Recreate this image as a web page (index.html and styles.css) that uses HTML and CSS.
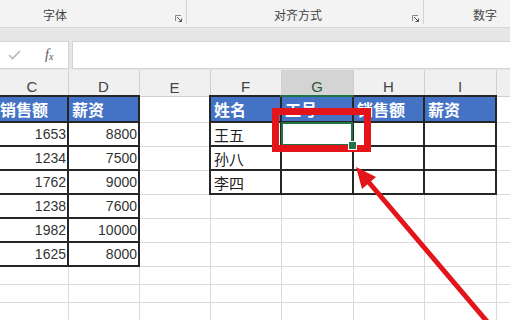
FILE: index.html
```html
<!DOCTYPE html>
<html lang="zh-CN">
<head>
    <meta charset="UTF-8">
    <title>工作表</title>
    <link rel="stylesheet" href="styles.css">
</head>
<body>
    <div class="ribbon">
        <div class="group g-font">
            <span class="group-label">字体</span>
            <span class="launcher"><svg width="7" height="7" viewBox="0 0 7 7"><path d="M0.5 6V0.5H6" fill="none" stroke="#888" stroke-width="1"/><path d="M2 2L6.5 6.5M6.5 3.5V6.5H3.5" fill="none" stroke="#555" stroke-width="1"/></svg></span>
        </div>
        <div class="group g-align">
            <span class="group-label">对齐方式</span>
            <span class="launcher"><svg width="7" height="7" viewBox="0 0 7 7"><path d="M0.5 6V0.5H6" fill="none" stroke="#888" stroke-width="1"/><path d="M2 2L6.5 6.5M6.5 3.5V6.5H3.5" fill="none" stroke="#555" stroke-width="1"/></svg></span>
        </div>
        <div class="group g-number">
            <span class="group-label">数字</span>
        </div>
    </div>

    <div class="formula-bar">
        <div class="name-box">
            <svg class="check" width="13" height="10" viewBox="0 0 13 10"><path d="M1 5L4.5 8.5L12 1" fill="none" stroke="#b8b8b8" stroke-width="1.6"/></svg>
            <span class="fx">f<sub>x</sub></span>
        </div>
        <div class="formula-input"></div>
    </div>

    <div class="sheet">
        <table class="grid">
            <colgroup>
                <col style="width:72px"><col style="width:71px"><col style="width:71px"><col style="width:71px">
                <col style="width:72px"><col style="width:71px"><col style="width:72px"><col style="width:30px">
            </colgroup>
            <tr class="col-heads">
                <td>C</td><td>D</td><td>E</td><td>F</td><td class="active-col">G</td><td>H</td><td>I</td><td></td>
            </tr>
            <tr class="r24">
                <td class="b head">销售额</td><td class="b head">薪资</td><td></td>
                <td class="b head">姓名</td><td class="b head">工号</td><td class="b head">销售额</td><td class="b head">薪资</td><td></td>
            </tr>
            <tr class="r24">
                <td class="b num">1653</td><td class="b num">8800</td><td></td>
                <td class="b">王五</td><td class="b selected"></td><td class="b"></td><td class="b"></td><td></td>
            </tr>
            <tr class="r24">
                <td class="b num">1234</td><td class="b num">7500</td><td></td>
                <td class="b">孙八</td><td class="b"></td><td class="b"></td><td class="b"></td><td></td>
            </tr>
            <tr class="r24">
                <td class="b num">1762</td><td class="b num">9000</td><td></td>
                <td class="b">李四</td><td class="b"></td><td class="b"></td><td class="b"></td><td></td>
            </tr>
            <tr class="r24">
                <td class="b num">1238</td><td class="b num">7600</td><td></td><td></td><td></td><td></td><td></td><td></td>
            </tr>
            <tr class="r24">
                <td class="b num">1982</td><td class="b num">10000</td><td></td><td></td><td></td><td></td><td></td><td></td>
            </tr>
            <tr class="r24">
                <td class="b num">1625</td><td class="b num">8000</td><td></td><td></td><td></td><td></td><td></td><td></td>
            </tr>
            <tr class="r18"><td></td><td></td><td></td><td></td><td></td><td></td><td></td><td></td></tr>
            <tr class="r18"><td></td><td></td><td></td><td></td><td></td><td></td><td></td><td></td></tr>
            <tr class="r18"><td></td><td></td><td></td><td></td><td></td><td></td><td></td><td></td></tr>
        </table>

        <!-- annotation: red frame and arrow pointing at the empty 工号 cell -->
        <div class="mark-box"></div>
        <svg class="mark-arrow" width="510" height="260" viewBox="0 70 510 260">
            <line x1="490" y1="325" x2="366" y2="179" stroke="#e3151a" stroke-width="5"/>
            <polygon points="356,167 376,177 362,189" fill="#e3151a"/>
        </svg>
    </div>
</body>
</html>
```

FILE: styles.css
```css
* {
    margin: 0;
    padding: 0;
    box-sizing: border-box;
}
html,
body {
    width: 510px;
    height: 320px;
    overflow: hidden;
    font-family: "Liberation Sans", "Noto Sans CJK SC", sans-serif;
    background: #fff;
}

/* ribbon group labels */
.ribbon {
    display: flex;
    height: 28px;
    background: #f3f3f3;
    border-bottom: 1px solid #d6d6d6;
}
.group {
    position: relative;
    display: flex;
    align-items: flex-end;
    padding-bottom: 1px;
    border-right: 1px solid #d4d4d4;
    margin-bottom: 3px;
}
.group-label {
    font-size: 12px;
    color: #444;
}
.g-font { width: 187px; padding-left: 43px; }
.g-align { width: 237px; padding-left: 87px; }
.g-number { flex: 1; padding-left: 49px; border-right: none; }
.launcher {
    margin-left: auto;
    margin-right: 4px;
    margin-bottom: 1px;
    display: flex;
}

/* formula bar */
.formula-bar {
    display: flex;
    height: 42px;
    padding: 13px 0 1px;
    background: #e6e6e6;
    gap: 3px;
}
.name-box {
    width: 69px;
    background: #fff;
    border: 1px solid #d4d4d4;
    border-left: none;
    display: flex;
    align-items: center;
}
.check {
    margin-left: 8px;
}
.fx {
    margin-left: 24px;
    font-family: "Liberation Serif", serif;
    font-style: italic;
    font-size: 14px;
    color: #555;
}
.fx sub {
    font-size: 10px;
    vertical-align: -1px;
}
.formula-input {
    flex: 1;
    background: #fff;
    border: 1px solid #d4d4d4;
    border-right: none;
}

/* worksheet */
.sheet {
    position: relative;
    background: #fff;
}
.grid {
    table-layout: fixed;
    border-collapse: collapse;
    margin-left: -5px;
    width: 530px;
}
.grid td {
    border: 1px solid #dadada;
    padding: 0 3px;
    font-size: 15px;
    color: #222;
    white-space: nowrap;
    overflow: hidden;
}
.col-heads td {
    height: 26px;
    background: #f0f0f0;
    border-color: #d0d0d0;
    border-top: none;
    text-align: center;
    vertical-align: bottom;
    padding-bottom: 0;
    font-size: 15px;
    color: #444;
}
.col-heads .active-col {
    background: #d4d4d4;
    border-bottom: 2px solid #217346;
    color: #2a5a3c;
}
.r24 td { height: 24px; }
.r18 td { height: 18px; }

.grid td.b {
    border: 2px solid #262626;
}
.grid td.head {
    background: #4472c4;
    color: #fff;
    font-weight: bold;
    font-size: 16px;
}
.grid td.num {
    text-align: right;
    font-size: 14px;
    color: #333;
    padding-right: 1px;
}
.grid td.selected {
    position: relative;
    overflow: visible;
}
.selected::after {
    content: "";
    position: absolute;
    inset: -1px;
    border: 2px solid #217346;
}
.selected::before {
    content: "";
    position: absolute;
    right: -5px;
    bottom: -5px;
    width: 7px;
    height: 7px;
    background: #217346;
    border: 1px solid #fff;
    z-index: 1;
}

.mark-box {
    position: absolute;
    left: 272px;
    top: 38px;
    width: 99px;
    height: 44px;
    border: 7px solid #e3151a;
}
.mark-arrow {
    position: absolute;
    left: 0;
    top: 0;
}
```
